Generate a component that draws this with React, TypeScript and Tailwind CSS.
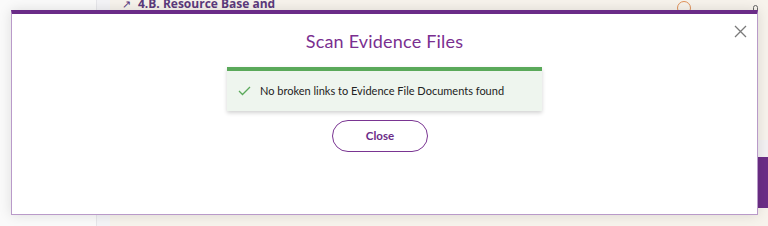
import React from "react";

export default function App() {
  return (
    <div className="relative w-[768px] h-[226px] overflow-hidden bg-[#f7f3ec]" style={{ fontFamily: "'Open Sans', 'Liberation Sans', sans-serif" }}>
      {/* background page */}
      <div className="flex h-full">
        <div className="w-[97px] h-full bg-[#fafafa] border-r border-[#e6e6ea]" />
        <div className="w-[13px] h-full bg-[#f4f4f7]" />
        <div className="flex-1 h-full relative">
          <div className="flex items-center gap-[7px] pl-[12px] -mt-[5px] text-[12px] font-bold text-[#5c3a7c]">
            <span className="text-[11px] font-normal">↗</span>
            <span>4.B. Resource Base and</span>
          </div>
          <div className="absolute left-[567px] top-[1px] w-[14px] h-[14px] rounded-full border-[1.5px] border-[#e0925a]" />
          <div className="absolute left-[643px] top-[5px] w-[5px] h-[8px] rounded-full border border-[#666]" />
          <div className="absolute left-0 right-0 top-[140px] h-[17px] bg-[#f3f1f3]" />
          <div className="absolute left-[648px] right-0 top-[157px] h-[51px] bg-[#6c2e87]" />
        </div>
      </div>

      {/* modal */}
      <div className="absolute left-[11px] top-[10px] w-[747px] h-[205px] bg-white border-x border-b border-[#b99ac9] border-t-[4px] border-t-[#6b2c88] shadow-[0_0_12px_rgba(0,0,0,0.12)]">
        <button className="absolute right-[10px] top-[10px] w-[14px] h-[14px] flex items-center justify-center">
          <svg width="13" height="13" viewBox="0 0 13 13" fill="none" stroke="#7a7a7a" strokeWidth="1.3">
            <path d="M1 1 L12 12 M12 1 L1 12" />
          </svg>
        </button>
        <div className="flex flex-col items-center">
          <h2 className="mt-[15px] text-[18px] leading-[24px] tracking-[0.2px] text-[#7a2f90]" style={{ fontFamily: "Lato, 'Open Sans', sans-serif" }}>
            Scan Evidence Files
          </h2>
          <div className="mt-[14px] w-[315px] h-[44px] bg-[#eef5ee] border-t-[4px] border-[#5aa95a] shadow-[0_2px_4px_rgba(0,0,0,0.18)] flex items-center pl-[11px] gap-[9px]">
            <svg width="13" height="10" viewBox="0 0 13 10" fill="none" stroke="#5aa95a" strokeWidth="1.3">
              <path d="M1 5 L4.5 8.5 L12 1" />
            </svg>
            <span className="text-[11px] text-[#222]" style={{ fontFamily: "Lato, 'Open Sans', sans-serif" }}>
              No broken links to Evidence File Documents found
            </span>
          </div>
          <button className="mt-[9px] mr-[9px] w-[96px] h-[32px] rounded-full border-[1.5px] border-[#7a3592] text-[#6b2c88] text-[11.5px] font-bold" style={{ fontFamily: "Lato, 'Open Sans', sans-serif" }}>
            Close
          </button>
        </div>
      </div>
    </div>
  );
}
